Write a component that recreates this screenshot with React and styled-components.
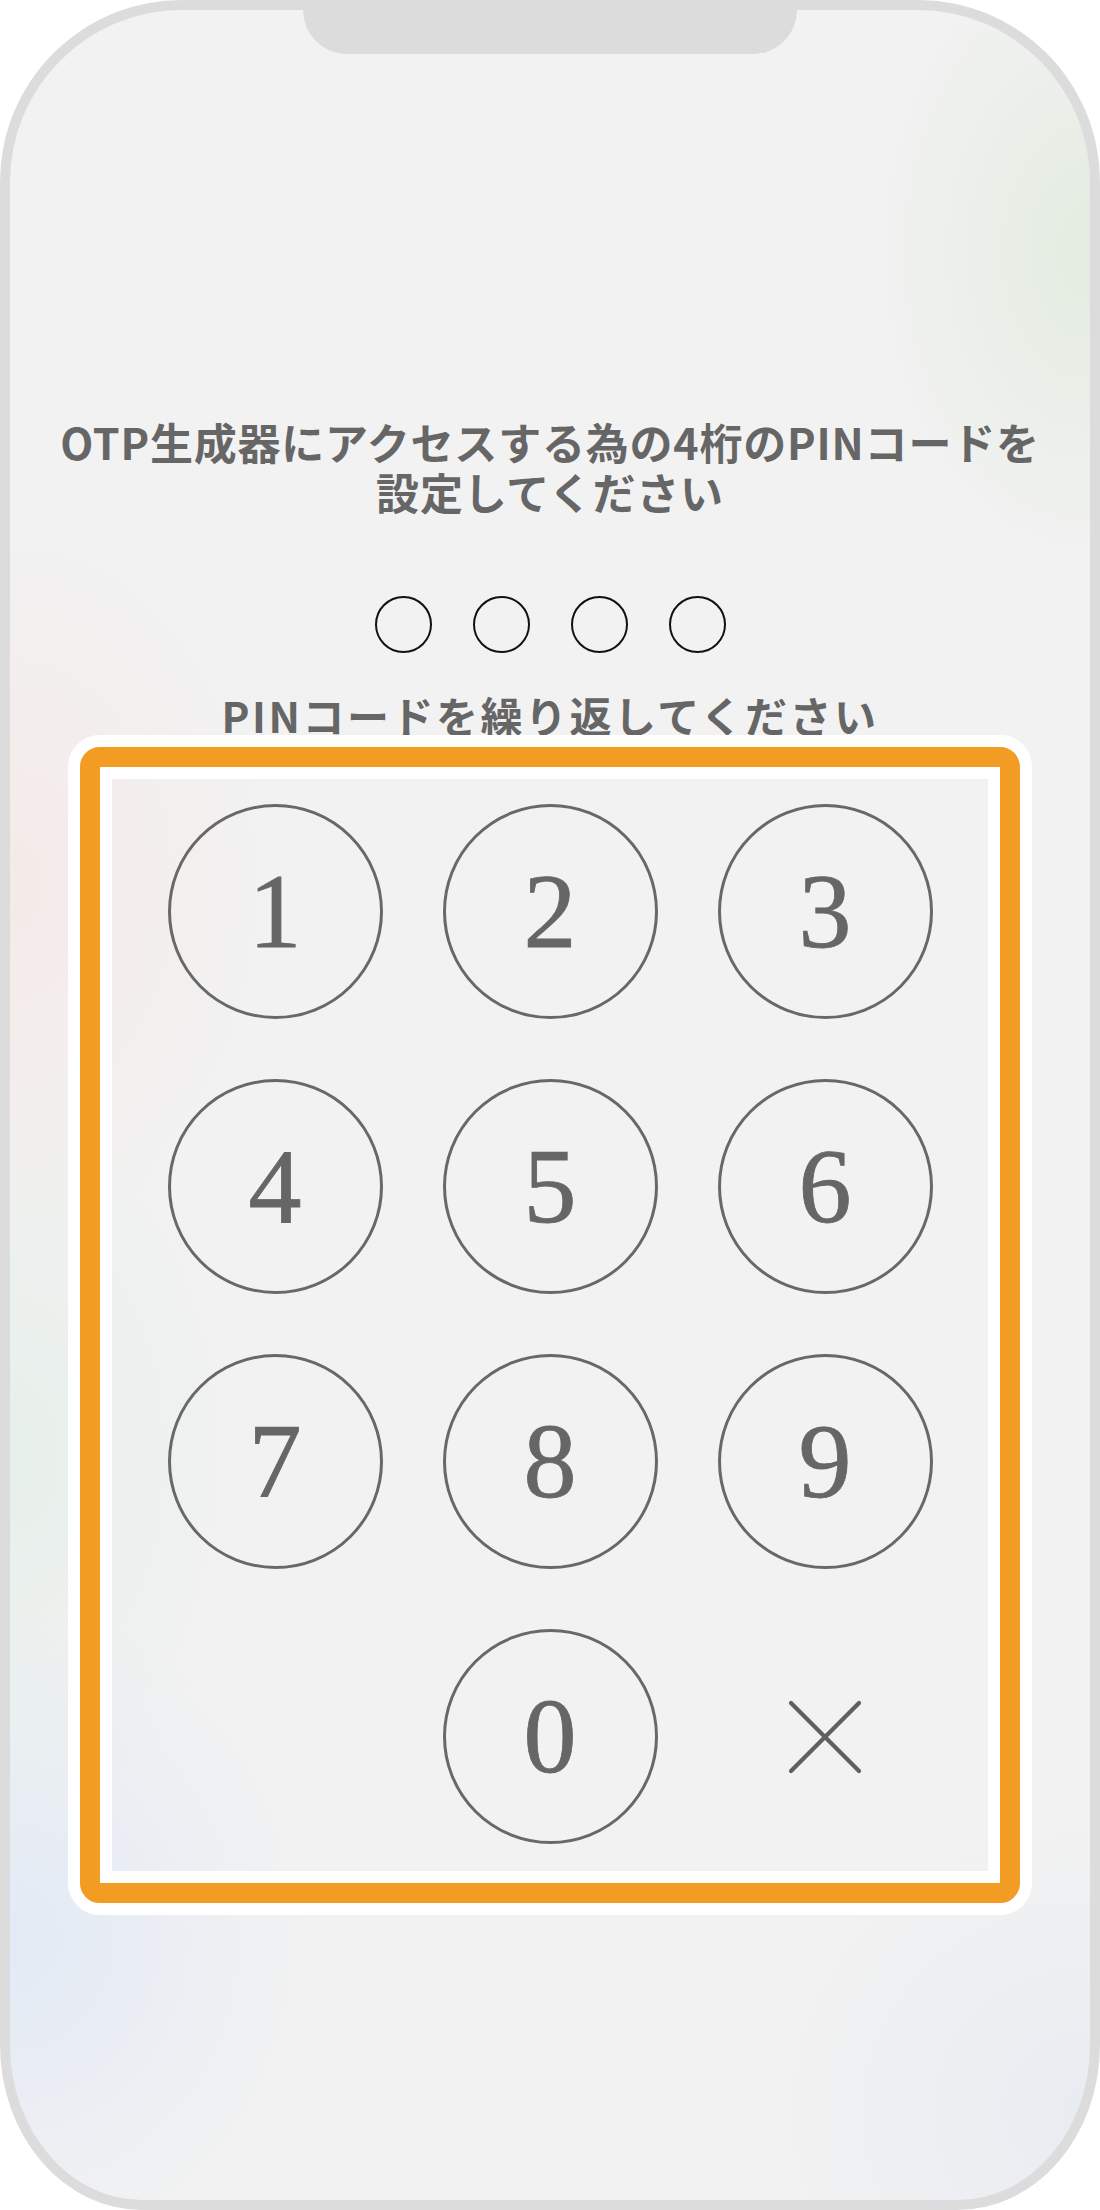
import React from 'react';
import styled, { createGlobalStyle } from 'styled-components';

const GlobalStyle = createGlobalStyle`
  html,
  body {
    margin: 0;
    padding: 0;
    background: #ffffff;
  }

  body {
    width: 1100px;
    height: 2210px;
    font-family: 'Noto Sans CJK JP', 'Noto Sans', sans-serif;
  }
`;

const StyledPhone = styled.div`
  box-sizing: border-box;
  width: 1100px;
  height: 2210px;
  border: 10px solid #dcdcdc;
  border-radius: 182px 182px 142px 142px / 182px 182px 165px 165px;
  overflow: hidden;
  display: flex;
  flex-direction: column;
  align-items: center;
  background:
    radial-gradient(ellipse 220px 320px at 100% 11%, rgba(222, 234, 218, 0.75), rgba(222, 234, 218, 0) 100%),
    radial-gradient(ellipse 260px 360px at 0% 40%, rgba(246, 228, 224, 0.55), rgba(246, 228, 224, 0) 100%),
    radial-gradient(ellipse 240px 380px at 0% 66%, rgba(224, 238, 230, 0.6), rgba(224, 238, 230, 0) 100%),
    radial-gradient(ellipse 300px 330px at 0% 88%, rgba(224, 233, 246, 0.85), rgba(224, 233, 246, 0) 100%),
    radial-gradient(ellipse 320px 300px at 100% 96%, rgba(228, 233, 241, 0.7), rgba(228, 233, 241, 0) 100%),
    #f2f2f2;
`;

const Notch = styled.div`
  flex: none;
  width: 494px;
  height: 44px;
  background: #dcdcdc;
  border-radius: 0 0 46px 46px;
`;

const Heading = styled.h1`
  width: 1010px;
  margin: 362px 0 0;
  color: #666666;
  font-size: 43px;
  font-weight: 700;
  line-height: 50px;
  letter-spacing: 0.8px;
  text-align: center;
`;

const Dots = styled.div`
  display: flex;
  gap: 41px;
  margin-top: 80px;
`;

const Dot = styled.span`
  box-sizing: border-box;
  width: 57px;
  height: 57px;
  border: 2.5px solid #111;
  border-radius: 50%;
`;

const Prompt = styled.p`
  margin: 42px 0 0;
  color: #666666;
  font-size: 42px;
  font-weight: 700;
  line-height: 40px;
  letter-spacing: 2.5px;
  text-align: center;
`;

const Highlight = styled.div`
  box-sizing: border-box;
  width: 964px;
  border: 12px solid #ffffff;
  border-radius: 32px;

  .ring {
    border: 20px solid #f39c24;
    border-radius: 20px;
  }

  .inner {
    border: 12px solid #ffffff;
    border-radius: 2px;
  }
`;

const Keypad = styled.div`
  display: grid;
  grid-template-columns: repeat(3, 215px);
  grid-auto-rows: 215px;
  gap: 60px;
  justify-content: center;
  padding: 25px 0 27px;
`;

const Key = styled.button`
  box-sizing: border-box;
  width: 215px;
  height: 215px;
  padding: 0;
  display: flex;
  align-items: center;
  justify-content: center;
  border: ${({ $plain }) => ($plain ? 'none' : '3.5px solid #686868')};
  border-radius: 50%;
  background: transparent;
  color: #666666;
  font-family: 'Liberation Serif', 'Times New Roman', serif;
  font-size: 106px;
  line-height: 1;
  -webkit-text-stroke: 0.8px #666666;
  cursor: pointer;
`;

const Spacer = styled.div``;

const CloseIcon = () => (
  <svg width="74" height="74" viewBox="0 0 74 74" fill="none">
    <path d="M3 3 L71 71 M71 3 L3 71" stroke="#5f5f5f" strokeWidth="4.2" strokeLinecap="round" />
  </svg>
);

const digits = ['1', '2', '3', '4', '5', '6', '7', '8', '9'];

const App = () => (
  <>
    <GlobalStyle />
    <StyledPhone>
      <Notch />

      <Heading>OTP生成器にアクセスする為の4桁のPINコードを設定してください</Heading>

      <Dots>
        <Dot />
        <Dot />
        <Dot />
        <Dot />
      </Dots>

      <Prompt>PINコードを繰り返してください</Prompt>

      <Highlight>
        <div className="ring">
          <div className="inner">
            <Keypad>
              {digits.map(d => (
                <Key key={d}>{d}</Key>
              ))}
              <Spacer />
              <Key>0</Key>
              <Key $plain aria-label="delete">
                <CloseIcon />
              </Key>
            </Keypad>
          </div>
        </div>
      </Highlight>
    </StyledPhone>
  </>
);

export default App;
